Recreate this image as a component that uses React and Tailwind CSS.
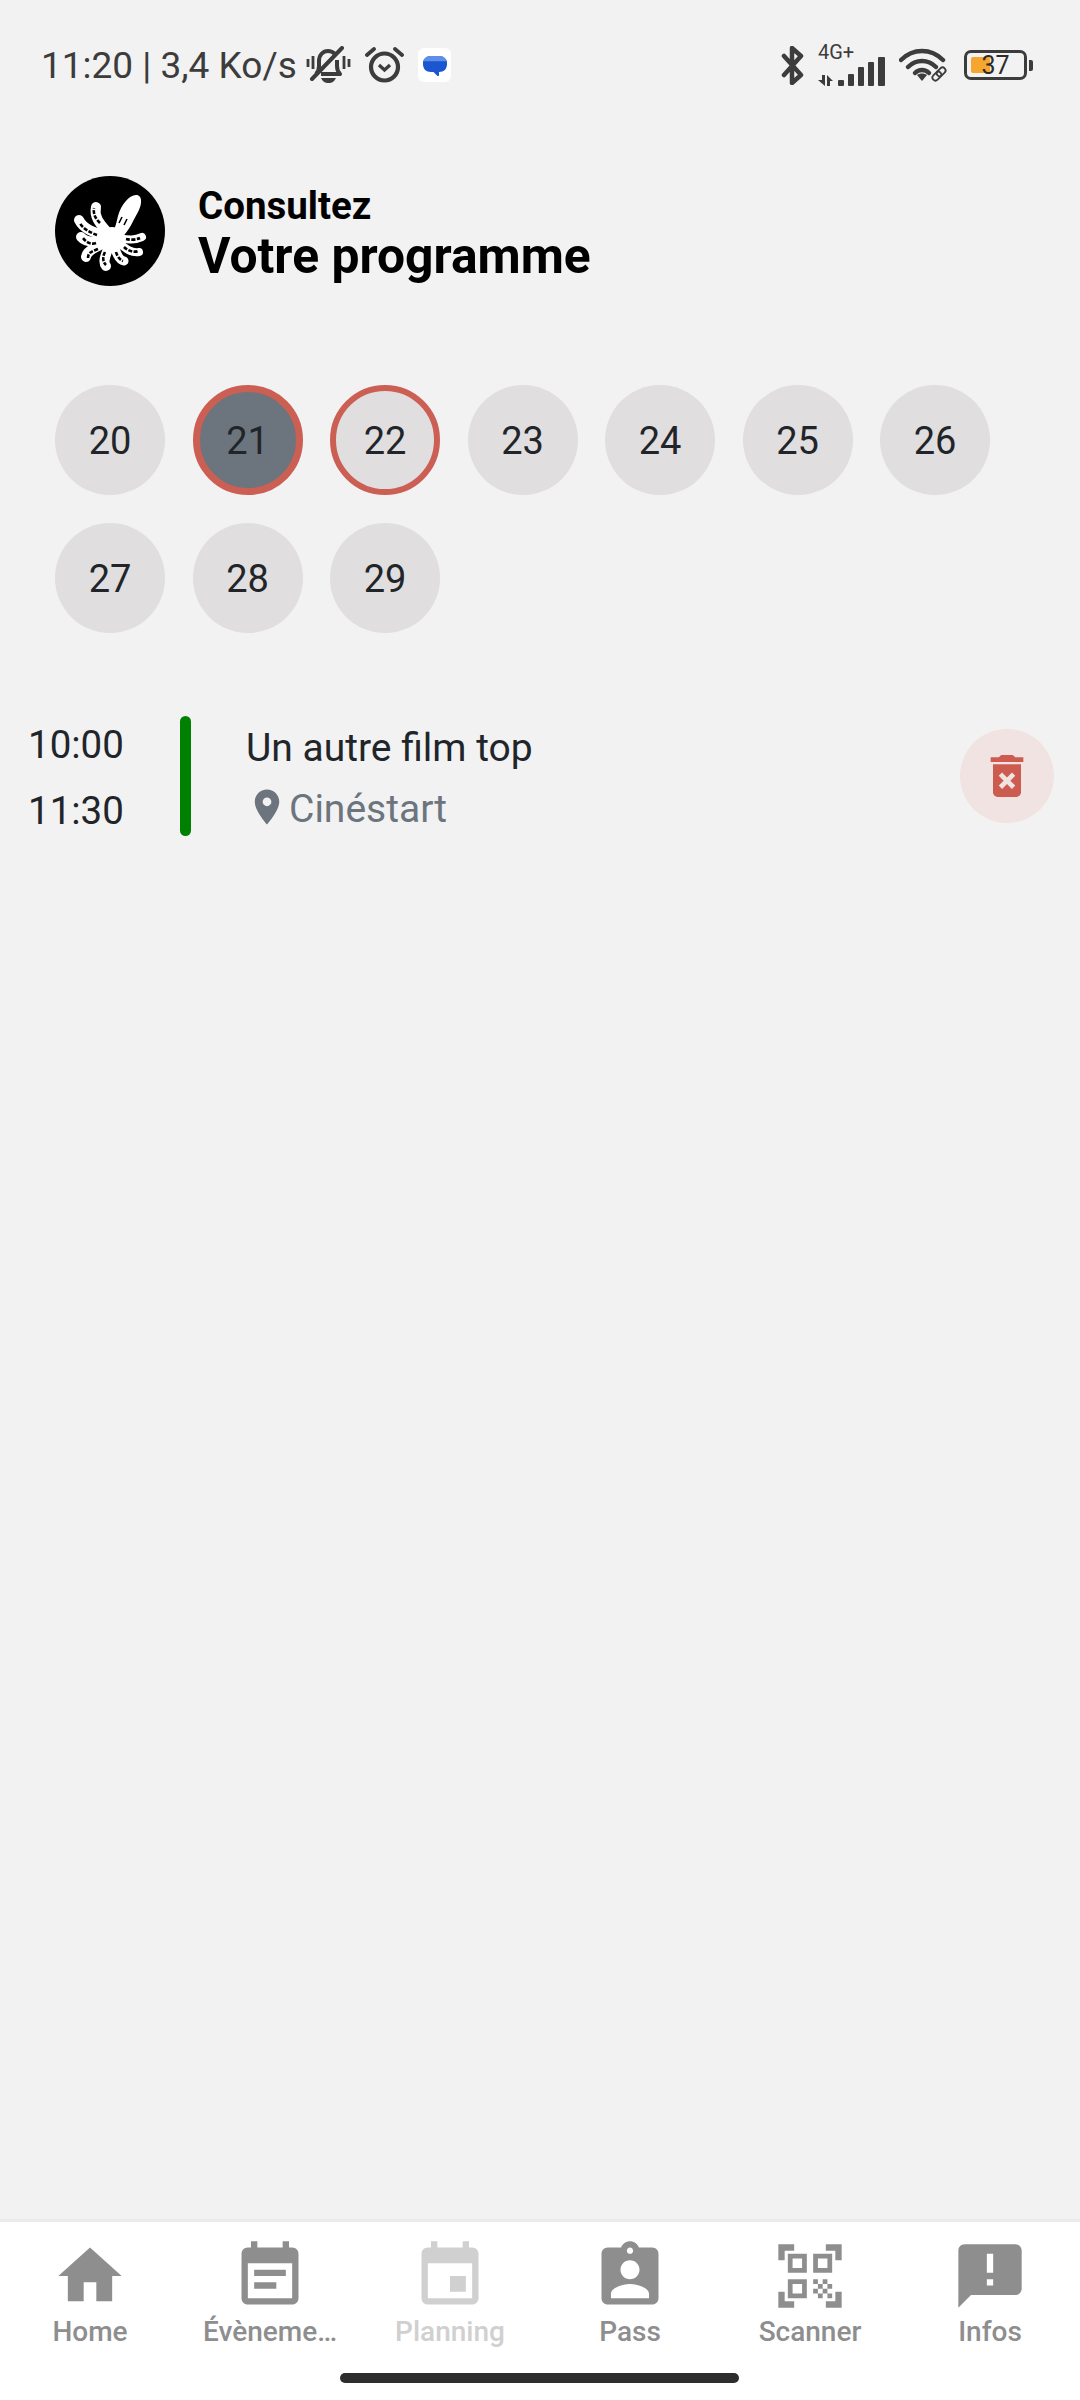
import React from 'react';

const days = [20, 21, 22, 23, 24, 25, 26, 27, 28, 29];

const tabs = [
  { label: 'Home', path: 'M10 20v-6h4v6h5v-8h3L12 3 2 12h3v8z' },
  { label: 'Évèneme…', path: 'M17 10H7v2h10v-2zm2-7h-1V1h-2v2H8V1H6v2H5c-1.11 0-1.99.9-1.99 2L3 19c0 1.1.89 2 2 2h14c1.1 0 2-.9 2-2V5c0-1.1-.9-2-2-2zm0 16H5V8h14v11zm-5-5H7v2h7v-2z' },
  { label: 'Planning', disabled: true, path: 'M17 12h-5v5h5v-5zM16 1v2H8V1H6v2H5c-1.11 0-1.99.9-1.99 2L3 19c0 1.1.89 2 2 2h14c1.1 0 2-.9 2-2V5c0-1.1-.9-2-2-2h-1V1h-2zm3 18H5V8h14v11z' },
  { label: 'Pass', path: 'M19 3h-4.18C14.4 1.84 13.3 1 12 1c-1.3 0-2.4.84-2.82 2H5c-1.1 0-2 .9-2 2v14c0 1.1.9 2 2 2h14c1.1 0 2-.9 2-2V5c0-1.1-.9-2-2-2zm-7 0c.55 0 1 .45 1 1s-.45 1-1 1-1-.45-1-1 .45-1 1-1zm0 4c1.66 0 3 1.34 3 3s-1.34 3-3 3-3-1.34-3-3 1.34-3 3-3zm6 12H6v-1.4c0-2 4-3.1 6-3.1s6 1.1 6 3.1V19z' },
  { label: 'Scanner', path: 'M9.5 6.5v3h-3v-3h3M11 5H5v6h6V5zm-1.5 9.5v3h-3v-3h3M11 13H5v6h6v-6zm6.5-6.5v3h-3v-3h3M19 5h-6v6h6V5zm-6 8h1.5v1.5H13V13zm1.5 1.5H16V16h-1.5v-1.5zM16 13h1.5v1.5H16V13zm-3 3h1.5v1.5H13V16zm1.5 1.5H16V19h-1.5v-1.5zM16 16h1.5v1.5H16V16zm1.5-1.5H19V16h-1.5v-1.5zm0 3H19V19h-1.5v-1.5zM22 7h-2V4h-3V2h5v5zm0 15v-5h-2v3h-3v2h5zM2 22h5v-2H4v-3H2v5zM2 2v5h2V4h3V2H2z' },
  { label: 'Infos', path: 'M20 2H4c-1.1 0-1.99.9-1.99 2L2 22l4-4h14c1.1 0 2-.9 2-2V4c0-1.1-.9-2-2-2zm-7 9h-2V5h2v6zm0 4h-2v-2h2v2z' },
];

const BellOff = () => (
  <svg width="45" height="38" viewBox="0 0 45 38" fill="none" stroke="#3c3c3c" strokeWidth="4">
    <path d="M10 28c2-2 3-4 3-8v-5c0-6 4-10 9-10 3 0 5 1 7 3M31 14v6c0 4 1 6 3 8H15" strokeLinejoin="round" />
    <path d="M6 33L36 2" strokeLinecap="round" />
    <path d="M2 13v8M7 10v13M38 10v13M43 13v8" strokeWidth="2.8" />
    <path d="M15 32h15c-2 4-4 5-7.500 5s-5.500-1-7.500-5z" fill="#3c3c3c" stroke="none" />
  </svg>
);

const Alarm = () => (
  <svg width="39" height="36" viewBox="0 0 39 36" fill="none" stroke="#3c3c3c">
    <circle cx="19.500" cy="20" r="13.500" strokeWidth="4.200" />
    <path d="M14 18l5.500 5 5.500-5" strokeWidth="3.400" />
    <path d="M2 8l7-6M37 8l-7-6" strokeWidth="3.800" strokeLinecap="round" />
  </svg>
);

const Messages = () => (
  <svg width="33" height="34" viewBox="0 0 33 34">
    <rect width="33" height="34" rx="6" fill="#ffffff" />
    <path d="M13 8h8c5 0 8 3 8 8s-3 8-8 8v3c0 1-1 1.500-2 .5l-3.500-3.500H13c-5 0-8-3-8-8s3-8 8-8z" fill="#1a56d0" />
    <path d="M13 8h8c4 0 7 2 8 5.500H5C6 10 9 8 13 8z" fill="#5e8fe6" />
    <path d="M5 13.500h24c0 .9 0 1 0 1.500H5z" fill="#1a56d0" />
  </svg>
);

const Bluetooth = () => (
  <svg width="24" height="39" viewBox="0 0 24 39" fill="none" stroke="#3c3c3c" strokeWidth="4.500" strokeLinejoin="round" strokeLinecap="round">
    <path d="M3 10l17 19-9 8V2l9 8L3 29" />
  </svg>
);

const Signal = () => (
  <svg width="68" height="32" viewBox="0 0 68 32" fill="#3c3c3c">
    <path d="M4 20h3v11l-7-6h4zM9 20l6 6h-3v5H9z" />
    <rect x="20" y="25" width="6" height="6" rx="1" />
    <rect x="30" y="19" width="6" height="12" rx="1" />
    <rect x="40" y="12" width="6" height="19" rx="1" />
    <rect x="50" y="7" width="6" height="24" rx="1" />
    <rect x="60" y="2" width="7" height="29" rx="1" />
  </svg>
);

const Wifi = () => (
  <svg width="50" height="34" viewBox="0 0 50 34" fill="none" stroke="#3c3c3c">
    <path d="M2 12C14 0 32 0 44 12" strokeWidth="4.500" strokeLinecap="round" />
    <path d="M9 19c8-8 20-8 28 0" strokeWidth="4.500" strokeLinecap="round" />
    <path d="M16 25c4-4 10-4 14 0" strokeWidth="4.500" strokeLinecap="round" />
    <path d="M18 27c3-2 7-2 10 0l-5 6z" fill="#3c3c3c" stroke="none" />
    <g strokeWidth="1.800" transform="rotate(-45 40 26)">
      <rect x="32" y="23" width="10" height="6" rx="3" />
      <rect x="38" y="23" width="10" height="6" rx="3" />
    </g>
  </svg>
);

const Logo = () => (
  <svg width="110" height="110" viewBox="0 0 110 110" className="rounded-full bg-black shrink-0">
    <g fill="none" stroke="#ffffff" strokeLinecap="round" strokeLinejoin="round" strokeWidth="10">
      <path d="M57 62C50 52 38 44 41 31" />
      <path d="M57 62C46 58 30 56 24 44" />
      <path d="M57 62C46 66 32 68 26 61" />
      <path d="M57 62C48 70 32 72 31 81" />
      <path d="M57 62C54 74 46 84 51 90" />
      <path d="M57 62C60 72 62 84 69 85" strokeWidth="9" />
      <path d="M57 62C66 68 74 78 84 76" strokeWidth="8" />
      <path d="M57 62C68 62 76 66 87 61" strokeWidth="8" />
    </g>
    <circle cx="57" cy="62" r="11" fill="#ffffff" />
    <path d="M53 60C60 56 61 48 63 40C66 29 74 19 81 19C88 19 87 29 83 36C78 45 75 53 66 63z" fill="#ffffff" />
    <g fill="none" stroke="#000000" strokeWidth="2.600" strokeDasharray="4 1.400" strokeLinecap="butt">
      <path d="M45 47C41 43 38 39 39 32" />
      <path d="M42 59C36 57 27 52 25 47" />
      <path d="M41 67C36 69 31 66 28 62" />
      <path d="M43 73C38 75 33 76 33 82" />
      <path d="M50 76C48 80 47 85 51 89" />
      <path d="M61 76C62 80 65 84 68 85" />
      <path d="M69 71C72 74 78 77 83 75" />
      <path d="M71 63C75 64 81 64 85 62" />
    </g>
    <path d="M64 47l3-6M69 49l3-6" stroke="#000000" strokeWidth="1.600" />
  </svg>
);

export default function App() {
  return (
    <div className="w-[1080px] h-[2400px] flex flex-col bg-[#f2f2f2] font-[Roboto,sans-serif] overflow-hidden">
      {/* Status bar */}
      <div className="h-[130px] shrink-0 flex items-center justify-between pl-[41px] pr-[47px]">
        <div className="flex items-center">
          <span className="text-[37px] leading-none text-[#3c3c3c]">11:20 | 3,4 Ko/s</span>
          <div className="flex items-center ml-[9px] gap-[14px]">
            <BellOff />
            <Alarm />
            <Messages />
          </div>
        </div>
        <div className="flex items-center">
          <Bluetooth />
          <div className="relative w-[68px] h-[36px] ml-[13px]">
            <span className="absolute left-0 top-[-5px] text-[20px] leading-none text-[#3c3c3c]">4G+</span>
            <div className="absolute left-0 bottom-[-4px]"><Signal /></div>
          </div>
          <div className="ml-[13px]"><Wifi /></div>
          <div className="relative w-[63px] h-[30px] ml-[15px] rounded-[7px] border-[3px] border-[#3c3c3c]">
            <div className="absolute left-[4px] top-[4px] w-[19px] h-[16px] rounded-[2px] bg-[#f6a62e]" />
            <span className="absolute inset-0 flex items-center justify-center text-[25px] leading-none text-[#2b2b2b]">37</span>
          </div>
          <div className="w-[4px] h-[11px] ml-[2px] rounded-r-[2px] bg-[#3c3c3c]" />
        </div>
      </div>

      {/* Header */}
      <div className="mt-[46px] ml-[55px] flex items-start">
        <Logo />
        <div className="ml-[33px] pt-[7px] flex flex-col text-black font-bold">
          <span className="text-[38.500px] leading-[46px]">Consultez</span>
          <span className="text-[49.800px] leading-[56px] mt-[-1px]">Votre programme</span>
        </div>
      </div>

      {/* Days */}
      <div className="mt-[99px] ml-[55px] flex flex-wrap w-[960px] gap-x-[27.500px] gap-y-[28px]">
        {days.map((day) => (
          <div
            key={day}
            className={`w-[110px] h-[110px] pt-[3px] rounded-full flex items-center justify-center text-[38px] text-[#212529] ${
              day === 21
                ? 'bg-[#6c757d] border-[7px] border-[#cb5f54]'
                : day === 22
                  ? 'bg-[#e0dede] border-[6px] border-[#cb5f54]'
                  : 'bg-[#e0dede]'
            }`}
          >
            {day}
          </div>
        ))}
      </div>

      {/* Event */}
      <div className="mt-[83px] flex items-center h-[120px]">
        <div className="w-[180px] pl-[28px] pt-[3px] flex flex-col gap-[21px] text-[38.500px] leading-[45px] text-[#212529]">
          <span>10:00</span>
          <span>11:30</span>
        </div>
        <div className="w-[11px] h-[120px] rounded-full bg-[#008000]" />
        <div className="ml-[55px] flex-1 pt-[5px] flex flex-col text-[39px] leading-[45px]">
          <span className="text-[#212529]">Un autre film top</span>
          <div className="flex items-center mt-[16px] text-[#6c757d]">
            <svg width="42" height="42" viewBox="0 0 24 24" fill="#6c757d" className="mt-[-5px]">
              <path d="M12 2C8.130 2 5 5.130 5 9c0 5.250 7 13 7 13s7-7.750 7-13c0-3.870-3.130-7-7-7zm0 9.500a2.500 2.500 0 0 1 0-5 2.500 2.500 0 0 1 0 5z" />
            </svg>
            <span className="ml-[1px]">Cinéstart</span>
          </div>
        </div>
        <button className="w-[94px] h-[94px] mr-[26px] rounded-full bg-[#f0e3e1] flex items-center justify-center">
          <svg width="56" height="56" viewBox="0 0 24 24" fill="#cd5c50">
            <path d="M6 19c0 1.100.9 2 2 2h8c1.100 0 2-.9 2-2V7H6v12zm2.460-7.120l1.410-1.410L12 12.590l2.120-2.120 1.410 1.410L13.410 14l2.120 2.120-1.410 1.410L12 15.410l-2.120 2.120-1.410-1.410L10.590 14l-2.130-2.120zM15.500 4l-1-1h-5l-1 1H5v2h14V4z" />
          </svg>
        </button>
      </div>

      <div className="flex-1" />

      {/* Bottom tabs */}
      <div className="h-[181px] shrink-0 bg-white border-t-[3px] border-[#ebebeb] flex flex-col">
        <div className="flex pt-[16px]">
          {tabs.map((tab) => (
            <div
              key={tab.label}
              className={`w-[180px] flex flex-col items-center ${tab.disabled ? 'text-[#d0d0d0]' : 'text-[#8e8e8f]'}`}
            >
              <svg width="76" height="76" viewBox="0 0 24 24" fill="currentColor">
                <path d={tab.path} />
              </svg>
              <span className="mt-[2px] text-[28px] leading-[32px] font-medium">{tab.label}</span>
            </div>
          ))}
        </div>
        <div className="mt-[25px] ml-[340px] w-[399px] h-[10px] rounded-full bg-[#2d2d2d]" />
      </div>
    </div>
  );
}
